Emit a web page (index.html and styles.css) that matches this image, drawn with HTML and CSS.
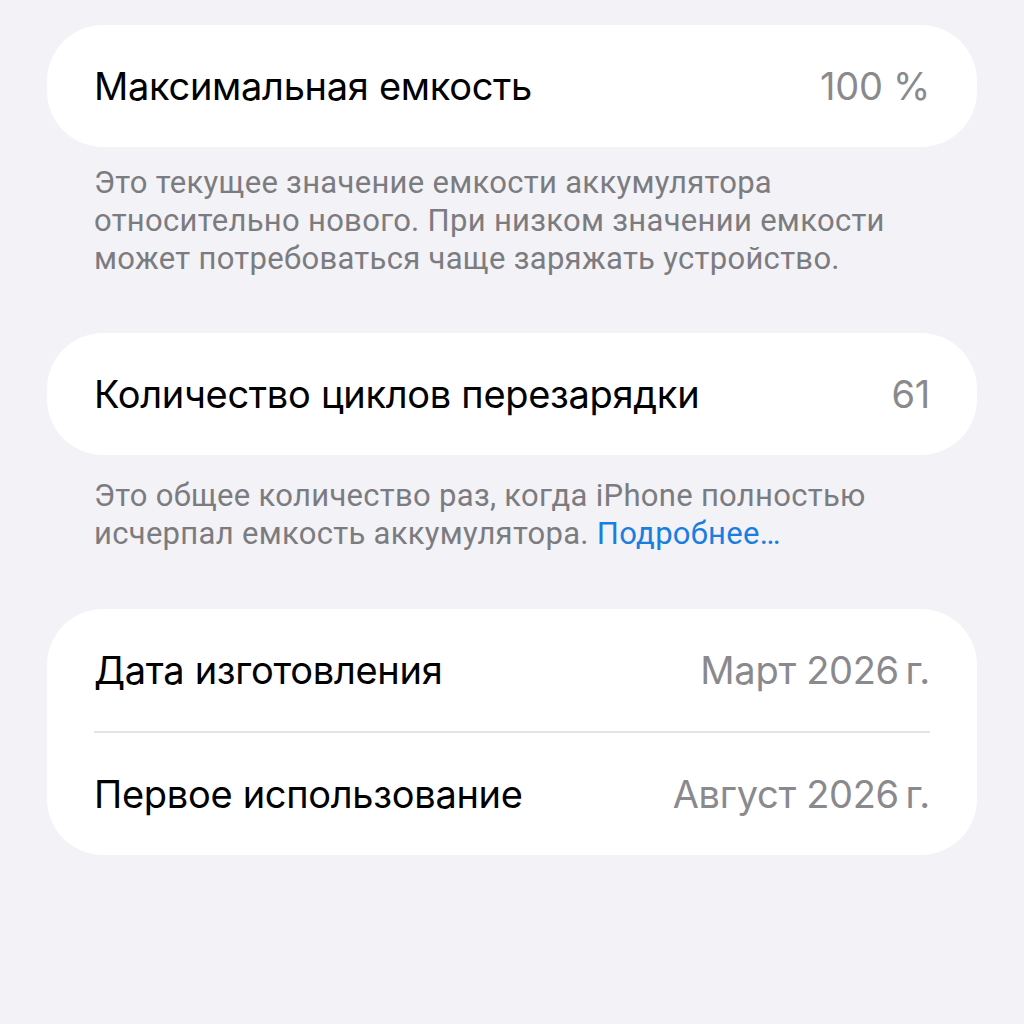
FILE: index.html
```html
<!DOCTYPE html>
<html lang="ru">
<head>
    <meta charset="UTF-8">
    <meta name="viewport" content="width=device-width, initial-scale=1.0">
    <title>Аккумулятор</title>
    <link rel="stylesheet" href="styles.css">
</head>
<body>
    <div class="page">
        <div class="group">
            <div class="row">
                <span class="label">Максимальная емкость</span>
                <span class="value">100 %</span>
            </div>
        </div>
        <p class="footnote">Это текущее значение емкости аккумулятора относительно нового. При низком значении емкости может потребоваться чаще заряжать устройство.</p>

        <div class="group">
            <div class="row">
                <span class="label">Количество циклов перезарядки</span>
                <span class="value">61</span>
            </div>
        </div>
        <p class="footnote short">Это общее количество раз, когда iPhone полностью исчерпал емкость аккумулятора. <a href="#">Подробнее…</a></p>

        <div class="group">
            <div class="row">
                <span class="label">Дата изготовления</span>
                <span class="value">Март 2026&#8201;г.</span>
            </div>
            <div class="row">
                <span class="label">Первое использование</span>
                <span class="value">Август 2026&#8201;г.</span>
            </div>
        </div>
    </div>
</body>
</html>
```

FILE: styles.css
```css
body {
    margin: 0;
    background: #f2f2f7;
    font-family: Inter, "Noto Sans", sans-serif;
    height: 1024px;
    overflow: hidden;
}
.page {
    padding: 25px 47px 0;
}
.group {
    background: #ffffff;
    border-radius: 56px;
    padding: 0 47px;
}
.row {
    display: flex;
    justify-content: space-between;
    align-items: center;
    height: 122px;
}
.row + .row {
    border-top: 2px solid #e4e4e8;
}
.label {
    font-size: 38px;
    color: #000000;
    letter-spacing: -0.3px;
}
.value {
    font-size: 38px;
    color: #8a8a8e;
    letter-spacing: -0.3px;
}
.footnote {
    margin: 0;
    padding: 17px 47px 55px;
    font-family: Roboto, sans-serif;
    font-size: 31px;
    line-height: 38px;
    color: #7c7c80;
    letter-spacing: 0.3px;
}
.footnote.short {
    padding-top: 22px;
    padding-bottom: 56px;
}
.footnote a {
    color: #1a7ee0;
    text-decoration: none;
}
```
